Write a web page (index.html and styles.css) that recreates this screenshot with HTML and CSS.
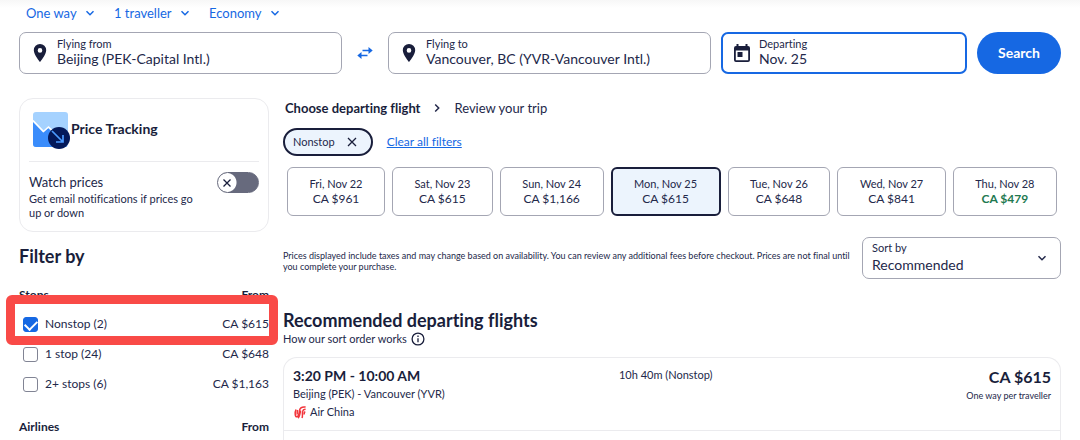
FILE: index.html
```html
<!DOCTYPE html>
<html lang="en">
<head>
    <meta charset="UTF-8">
    <title>Flights</title>
    <link rel="stylesheet" href="styles.css">
</head>
<body>
<div class="page">
    <!-- search form -->
    <form class="search">
        <div class="options">
            <div class="option">
                <select aria-label="Trip type"><option>One way</option></select>
                <svg class="arrow" viewBox="0 0 10 10"><path d="M1.5 3.2 5 6.7 8.5 3.2"/></svg>
            </div>
            <div class="option">
                <select aria-label="Travellers"><option>1 traveller</option></select>
                <svg class="arrow" viewBox="0 0 10 10"><path d="M1.5 3.2 5 6.7 8.5 3.2"/></svg>
            </div>
            <div class="option">
                <select aria-label="Cabin class"><option>Economy</option></select>
                <svg class="arrow" viewBox="0 0 10 10"><path d="M1.5 3.2 5 6.7 8.5 3.2"/></svg>
            </div>
        </div>
        <div class="fields">
            <div class="field field-place">
                <svg class="icon" viewBox="0 0 20 20"><path fill-rule="evenodd" d="M10 1a6.2 6.2 0 0 0-6.2 6.3C3.8 12 10 19 10 19s6.2-7 6.2-11.7A6.2 6.2 0 0 0 10 1zm0 4.1a2.3 2.3 0 1 1 0 4.6 2.3 2.3 0 0 1 0-4.6z"/></svg>
                <div class="field-text">
                    <label for="from">Flying from</label>
                    <input type="text" id="from" value="Beijing (PEK-Capital Intl.)">
                </div>
            </div>
            <button type="button" class="swap" aria-label="Swap">
                <svg viewBox="0 0 16 14"><path fill="none" stroke="#1668e3" stroke-width="1.6" d="M5.5 4.5H13M10.5 9.5H3"/><path fill="#1668e3" d="M11.5 1 15.7 4.5 11.5 8zM4.5 6 .3 9.5 4.5 13z"/></svg>
            </button>
            <div class="field field-place">
                <svg class="icon" viewBox="0 0 20 20"><path fill-rule="evenodd" d="M10 1a6.2 6.2 0 0 0-6.2 6.3C3.8 12 10 19 10 19s6.2-7 6.2-11.7A6.2 6.2 0 0 0 10 1zm0 4.1a2.3 2.3 0 1 1 0 4.6 2.3 2.3 0 0 1 0-4.6z"/></svg>
                <div class="field-text">
                    <label for="to">Flying to</label>
                    <input type="text" id="to" value="Vancouver, BC (YVR-Vancouver Intl.)">
                </div>
            </div>
            <div class="field field-date">
                <svg class="icon" viewBox="0 0 20 20"><path fill-rule="evenodd" d="M4.5 1h2v2h7V1h2v2H16a2 2 0 0 1 2 2v12a2 2 0 0 1-2 2H4a2 2 0 0 1-2-2V5a2 2 0 0 1 2-2h.5zM3.8 7.5v9.7h12.4V7.5zM5.5 9h5v5h-5z"/></svg>
                <div class="field-text">
                    <label for="date">Departing</label>
                    <input type="text" id="date" value="Nov. 25">
                </div>
            </div>
            <button type="submit" class="btn-search">Search</button>
        </div>
    </form>

    <div class="content">
        <!-- left column -->
        <aside class="side">
            <div class="tracking">
                <div class="tracking-head">
                    <svg class="tracking-icon" viewBox="0 0 38 38">
                        <rect width="35" height="35" rx="3" fill="#a5d2ff"/>
                        <path fill="#3a8cfb" d="M0 10 10 20.5 15 16 34 35H3a3 3 0 0 1-3-3z"/>
                        <path fill="none" stroke="#fff" stroke-width="1.6" d="M0 8.5 10.5 19.5 15.5 15 21 20"/>
                        <circle cx="26" cy="26" r="11" fill="#04195a"/>
                        <path fill="none" stroke="#4c9bff" stroke-width="1.7" d="M19 19 29.5 29.5M23 30h7v-7"/>
                    </svg>
                    <h2>Price Tracking</h2>
                </div>
                <div class="watch">
                    <div class="watch-text">
                        <label for="watch">Watch prices</label>
                        <p>Get email notifications if prices go up or down</p>
                    </div>
                    <div class="switch">
                        <input type="checkbox" role="switch" id="watch">
                        <svg viewBox="0 0 10 10"><path d="M1.5 1.5 8.5 8.5M8.5 1.5 1.5 8.5"/></svg>
                    </div>
                </div>
            </div>

            <h2 class="filter-title">Filter by</h2>
            <div class="filter-head"><h3>Stops</h3><span>From</span></div>
            <ul class="stops">
                <li class="marked">
                    <input type="checkbox" id="stop0" checked>
                    <label for="stop0">Nonstop (2)</label>
                    <span>CA $615</span>
                </li>
                <li>
                    <input type="checkbox" id="stop1">
                    <label for="stop1">1 stop (24)</label>
                    <span>CA $648</span>
                </li>
                <li>
                    <input type="checkbox" id="stop2">
                    <label for="stop2">2+ stops (6)</label>
                    <span>CA $1,163</span>
                </li>
            </ul>
            <div class="filter-head"><h3>Airlines</h3><span>From</span></div>
        </aside>

        <!-- results -->
        <main class="main">
            <div class="steps">
                <b>Choose departing flight</b>
                <svg class="arrow" viewBox="0 0 10 10"><path d="M3.2 1.5 6.7 5 3.2 8.5"/></svg>
                <span>Review your trip</span>
            </div>
            <div class="chips">
                <button type="button" class="chip">Nonstop
                    <svg viewBox="0 0 10 10"><path d="M1 1 9 9M9 1 1 9"/></svg>
                </button>
                <a href="#">Clear all filters</a>
            </div>
            <div class="dates">
                <button type="button">Fri, Nov 22<span>CA $961</span></button>
                <button type="button">Sat, Nov 23<span>CA $615</span></button>
                <button type="button">Sun, Nov 24<span>CA $1,166</span></button>
                <button type="button" class="current">Mon, Nov 25<span>CA $615</span></button>
                <button type="button">Tue, Nov 26<span>CA $648</span></button>
                <button type="button">Wed, Nov 27<span>CA $841</span></button>
                <button type="button">Thu, Nov 28<span class="cheap">CA $479</span></button>
            </div>
            <div class="sort-row">
                <p>Prices displayed include taxes and may change based on availability. You can review any additional fees before checkout. Prices are not final until you complete your purchase.</p>
                <div class="sort">
                    <label for="sort">Sort by</label>
                    <select id="sort"><option>Recommended</option></select>
                    <svg class="arrow" viewBox="0 0 10 10"><path d="M1.5 3.2 5 6.7 8.5 3.2"/></svg>
                </div>
            </div>
            <h1>Recommended departing flights</h1>
            <div class="how">How our sort order works
                <svg viewBox="0 0 14 14"><circle cx="7" cy="7" r="5.9"/><path d="M7 6.3v4M7 3.6v1.5"/></svg>
            </div>
            <div class="results">
                <div class="flight">
                    <div class="flight-info">
                        <h3>3:20 PM - 10:00 AM</h3>
                        <p>Beijing (PEK) - Vancouver (YVR)</p>
                        <p class="airline">
                            <svg viewBox="0 0 14 14"><path d="M3 4.5C1.8 7 1.8 11.8 3.8 11.8S6 8 6.6 5.2C7 2.6 9.4 1.6 12.6 2M4.600 5C4 7 4 8.500 4.200 9.500M7.600 5.500C7 8.500 6.500 12.500 5 13M9 13C10 11 9 8.500 9.600 6.500 10 4.800 11 4.200 12.600 4.400M11.300 9.500C11 8 11.300 7 12.300 6.700"/></svg>
                            Air China
                        </p>
                    </div>
                    <div class="flight-time">10h 40m (Nonstop)</div>
                    <div class="flight-price">
                        <b>CA $615</b>
                        <span>One way per traveller</span>
                    </div>
                </div>
            </div>
        </main>
    </div>
</div>
</body>
</html>
```
FILE: styles.css
```css
* {
    padding: 0;
    margin: 0;
    box-sizing: border-box;
}

body {
    font: 12px/16px Lato, "Noto Sans", sans-serif;
    font-variant-ligatures: none;
    color: #23284a;
    background: #fff linear-gradient(#f7f7f7, #fff) no-repeat 0 0 / 100% 8px;
}

button,
input,
select {
    font: inherit;
    color: inherit;
    background: none;
    border: 0;
    outline: 0;
}

select,
input[type="checkbox"] {
    appearance: none;
}

button,
select {
    cursor: pointer;
}

h1,
h2,
h3,
b {
    color: #191e3b;
}

ul {
    list-style: none;
}

a {
    color: #1668e3;
}

.page {
    display: flex;
    flex-direction: column;
    min-height: 100vh;
    padding: 5px 19px 0;
}

.arrow {
    width: 10px;
    height: 10px;
    fill: none;
    stroke: currentColor;
    stroke-width: 1.5;
    pointer-events: none;
}

/* search form */
.options {
    display: flex;
    gap: 19px;
    padding-left: 7px;
    font-size: 13px;
    color: #1668e3;
}

.option {
    display: flex;
    align-items: center;
    gap: 8px;
}

.fields {
    display: flex;
    gap: 10px;
    margin-top: 11px;
}

.field {
    display: flex;
    align-items: center;
    gap: 7px;
    min-width: 0;
    height: 42px;
    padding: 0 10px;
    border: 1px solid #a4a6b3;
    border-radius: 7px;
}

.field-place {
    flex: 1 1 323px;
}

.field-date {
    flex: 1 1 246px;
    padding: 0 9px;
    border: 2px solid #1668e3;
}

.icon {
    flex: none;
    width: 20px;
    height: 20px;
    fill: #191e3b;
}

.field-text {
    flex: 1;
    min-width: 0;
}

.field-text label {
    display: block;
    font-size: 11px;
    line-height: 12px;
}

.field-text input {
    display: block;
    width: 100%;
    font-size: 14px;
    line-height: 18px;
}

.swap {
    width: 26px;
}

.swap svg {
    display: block;
    width: 16px;
    height: 14px;
    margin: 0 auto;
}

.btn-search {
    width: 84px;
    border-radius: 21px;
    background: #1668e3;
    color: #fff;
    font-size: 14px;
    font-weight: bold;
}

.content {
    display: flex;
    flex: 1;
    gap: 14px;
    margin-top: 24px;
}

/* left column */
.side {
    flex: none;
    width: 250px;
}

.tracking {
    height: 134px;
    padding: 0 9px;
    border: 1px solid #ebebee;
    border-radius: 14px;
}

.tracking-head {
    display: flex;
    height: 63px;
    padding: 13px 0 0 4px;
    border-bottom: 1px solid #ebebee;
}

.tracking-icon {
    width: 38px;
    height: 38px;
}

.tracking-head h2 {
    font-size: 14px;
    line-height: 34px;
}

.watch {
    display: flex;
    justify-content: space-between;
    padding-top: 10px;
}

.watch-text {
    width: 172px;
}

.watch label {
    display: block;
    font-size: 13px;
    line-height: 20px;
}

.watch p {
    font-size: 11px;
    line-height: 14px;
}

.switch {
    display: grid;
    align-items: center;
    width: 42px;
    height: 21px;
}

.switch input,
.switch svg {
    grid-area: 1 / 1;
}

.switch input {
    width: 42px;
    height: 21px;
    border: 1px solid #676a7d;
    border-radius: 11px;
    background: radial-gradient(circle at 9px 50%, #fff 9px, #676a7d 10px);
}

.switch svg {
    width: 10px;
    height: 10px;
    margin-left: 5px;
    pointer-events: none;
}

.switch path,
.chip path,
.how svg {
    fill: none;
    stroke: #191e3b;
    stroke-width: 1.3;
}

.filter-title {
    margin: 12px 0 19px;
    font-size: 18px;
    line-height: 24px;
}

.filter-head {
    display: flex;
    justify-content: space-between;
    color: #191e3b;
    font-weight: bold;
}

.filter-head h3 {
    font-size: 12px;
}

.stops {
    margin: 6px 0 20px;
}

.stops li {
    display: flex;
    align-items: center;
    gap: 7px;
    height: 30px;
    padding-left: 4px;
}

.stops label {
    flex: 1;
}

.stops input {
    display: grid;
    justify-content: center;
    width: 15px;
    height: 15px;
    border: 1px solid #818494;
    border-radius: 3px;
}

.stops input:checked {
    border-color: #1668e3;
    background: #1668e3;
}

.stops input:checked::before {
    content: "";
    width: 10px;
    height: 6px;
    margin-top: 2px;
    border: solid #fff;
    border-width: 0 0 2px 2px;
    transform: rotate(-45deg);
}

/* red frame over the nonstop row */
.marked {
    position: relative;
}

.marked::after {
    content: "";
    position: absolute;
    inset: -14px -9px -6px -13px;
    border: 9px solid #f94a47;
    border-radius: 6px;
    pointer-events: none;
}

/* results */
.main {
    display: flex;
    flex: 1;
    flex-direction: column;
    min-width: 0;
}

.steps {
    display: flex;
    align-items: center;
    gap: 12px;
    padding: 2px 2px 0;
    font-size: 13px;
}

.chips {
    display: flex;
    align-items: center;
    gap: 14px;
    margin-top: 12px;
}

.chip {
    display: flex;
    align-items: center;
    gap: 12px;
    height: 28px;
    padding: 0 14px 0 8px;
    border: 2px solid #191e3b;
    border-radius: 14px;
    background: #ecf4fd;
    font-size: 11px;
}

.chip svg {
    width: 10px;
    height: 10px;
}

.dates {
    display: flex;
    gap: 7px;
    margin-top: 11px;
    padding: 0 4px;
}

.dates button {
    flex: 1 1 auto;
    height: 49px;
    border: 1px solid #a4a6b3;
    border-radius: 6px;
    font-size: 11px;
    line-height: 14px;
}

.dates span {
    display: block;
    font-size: 12px;
    line-height: 16px;
}

.dates .current {
    border: 2px solid #191e3b;
    background: #ecf4fd;
}

.dates .cheap {
    color: #227950;
    font-weight: bold;
}

.sort-row {
    display: flex;
    align-items: center;
    gap: 10px;
    margin-top: 21px;
}

.sort-row p {
    flex: 1;
    padding-top: 6px;
    font-size: 9px;
    line-height: 11px;
}

.sort {
    display: grid;
    grid-template-columns: 1fr auto;
    grid-template-rows: 14px 20px;
    align-content: center;
    align-items: center;
    width: 199px;
    height: 42px;
    padding: 0 13px 0 9px;
    border: 1px solid #a4a6b3;
    border-radius: 7px;
}

.sort label {
    grid-area: 1 / 1;
    font-size: 11px;
    line-height: 14px;
}

.sort select {
    grid-area: 2 / 1 / 3 / 3;
    font-size: 14px;
    line-height: 20px;
}

.sort .arrow {
    grid-area: 1 / 2 / 3 / 3;
}

.main h1 {
    margin-top: 29px;
    font-size: 18px;
    line-height: 24px;
}

.how {
    display: flex;
    align-items: center;
    gap: 4px;
    font-size: 11px;
    line-height: 14px;
}

.how svg {
    width: 14px;
    height: 14px;
}

.results {
    flex: 1;
    margin-top: 11px;
    border: 1px solid #ebebee;
    border-bottom: 0;
    border-radius: 14px 14px 0 0;
}

.flight {
    display: grid;
    grid-template-columns: 43% 1fr auto;
    height: 73px;
    padding: 9px 9px 0;
    border-bottom: 1px solid #ebebee;
}

.flight h3 {
    font-size: 14px;
    line-height: 18px;
}

.flight p {
    font-size: 11px;
    line-height: 18px;
}

.airline {
    display: flex;
    align-items: center;
    gap: 3px;
}

.airline svg {
    width: 14px;
    height: 14px;
    fill: none;
    stroke: #f2353b;
    stroke-width: 1.5;
}

.flight-time {
    font-size: 11px;
}

.flight-price {
    text-align: right;
}

.flight-price b {
    display: block;
    font-size: 16px;
    line-height: 20px;
}

.flight-price span {
    font-size: 9px;
}
```
